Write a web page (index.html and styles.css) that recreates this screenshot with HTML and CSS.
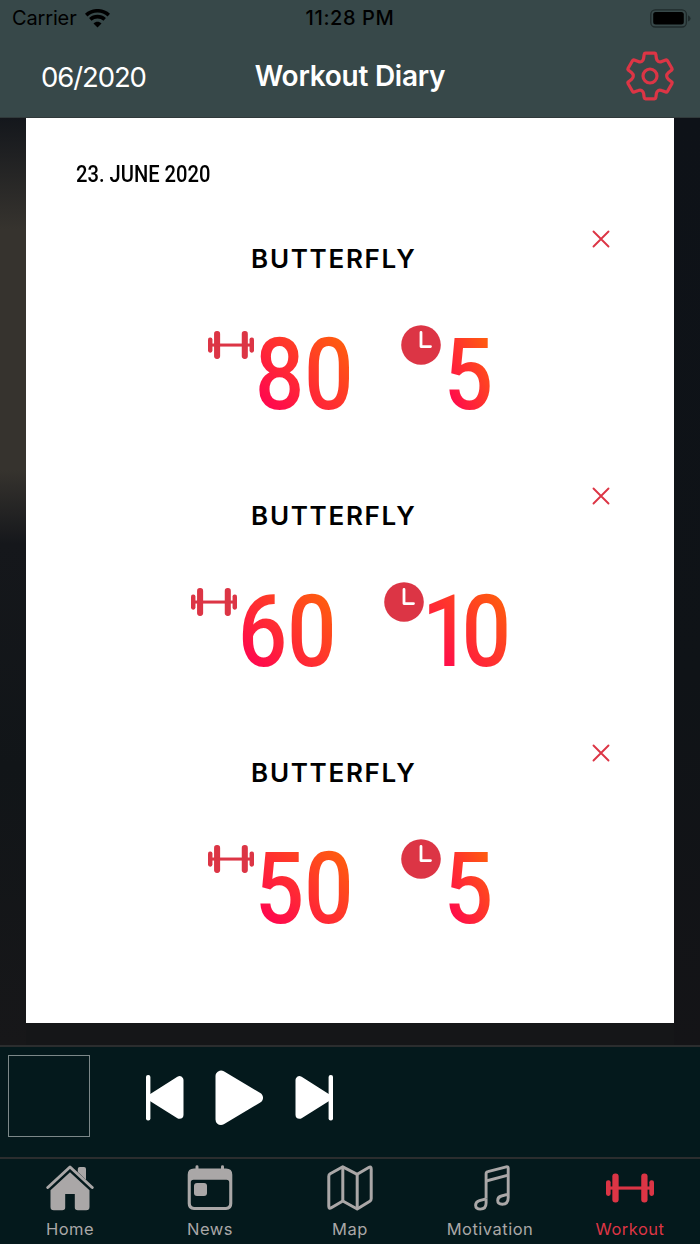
FILE: index.html
```html
<!DOCTYPE html>
<html lang="en">
  <head>
    <meta charset="UTF-8" />
    <meta name="viewport" content="width=device-width, initial-scale=1.0" />
    <title>Workout Diary</title>
    <link rel="stylesheet" href="styles.css">
  </head>
  <body>
    <!-- shared icons -->
    <svg class="sprite">
      <symbol id="dumbbell" viewBox="0 0 45.5 27.5">
        <rect x="0" y="6.3" width="4.4" height="15" rx="2" />
        <rect x="6" y="0" width="6" height="27.5" rx="2.8" />
        <rect x="3" y="12.3" width="39" height="3" />
        <rect x="33.4" y="0" width="6" height="27.5" rx="2.8" />
        <rect x="41.1" y="6.3" width="4.4" height="15" rx="2" />
      </symbol>
      <symbol id="clock" viewBox="0 0 40 40">
        <circle cx="20" cy="20" r="19.8" />
        <path d="M20 7.5V21.6H29.5" fill="none" stroke="#fff" stroke-width="2.8" stroke-linecap="round" stroke-linejoin="round" />
      </symbol>
      <symbol id="close" viewBox="0 0 18 18">
        <path d="M1.5 1.5L16.5 16.5M16.5 1.5L1.5 16.5" fill="none" stroke="currentColor" stroke-width="1.9" stroke-linecap="round" />
      </symbol>
    </svg>

    <header>
      <div class="status">
        <div class="carrier">
          <span>Carrier</span>
          <svg width="25" height="19" viewBox="0 0 25 19">
            <g fill="none" stroke="#000" stroke-width="3.6">
              <path d="M1.2 6.1C7.5 .3 17.5 .3 23.8 6.1" />
              <path d="M5.3 10.4C9.4 6.7 15.6 6.7 19.7 10.4" />
            </g>
            <path d="M8.5 14.4C10.8 12.2 14.2 12.2 16.5 14.4L12.5 18.5Z" />
          </svg>
        </div>
        <span class="time">11:28 PM</span>
        <svg class="battery" width="41" height="19" viewBox="0 0 41 19">
          <rect x=".8" y=".8" width="35.6" height="17.2" rx="4.5" fill="none" stroke="#1f2a2b" stroke-width="1.3" />
          <rect x="3.2" y="3" width="30.6" height="12.6" rx="2.5" />
          <path d="M38 6.3Q40.6 7.5 40.6 9.4Q40.6 11.3 38 12.5Z" fill="#1f2a2b" />
        </svg>
      </div>
      <nav class="navbar">
        <a class="month">06/2020</a>
        <h1>Workout Diary</h1>
        <a class="settings">
          <svg width="50" height="50" viewBox="-25 -25 50 50">
            <g fill="none" stroke="currentColor" stroke-width="3.2" stroke-linejoin="round">
              <path d="M-4.5 -22.8H4.5Q5.6 -22.8 5.8 -21.7L6.4 -17.5Q6.7 -15.5 8.2 -14.6Q9.8 -13.7 11.7 -14.5L15.8 -16.1Q16.8 -16.5 17.4 -15.5L22 -7.5Q22.5 -6.5 21.7 -5.9L18.3 -3.2Q16.7 -1.9 16.7 0Q16.7 1.9 18.3 3.2L21.7 5.9Q22.5 6.5 22 7.5L17.4 15.5Q16.8 16.5 15.8 16.1L11.7 14.5Q9.8 13.7 8.2 14.6Q6.7 15.5 6.4 17.5L5.8 21.7Q5.6 22.8 4.5 22.8H-4.5Q-5.6 22.8 -5.8 21.7L-6.4 17.5Q-6.7 15.5 -8.2 14.6Q-9.8 13.7 -11.7 14.5L-15.8 16.1Q-16.8 16.5 -17.4 15.5L-22 7.5Q-22.5 6.5 -21.7 5.9L-18.3 3.2Q-16.7 1.9 -16.7 0Q-16.7 -1.9 -18.3 -3.2L-21.7 -5.9Q-22.5 -6.5 -22 -7.5L-17.4 -15.5Q-16.8 -16.5 -15.8 -16.1L-11.7 -14.5Q-9.8 -13.7 -8.2 -14.6Q-6.7 -15.5 -6.4 -17.5L-5.8 -21.7Q-5.6 -22.8 -4.5 -22.8Z" />
              <circle r="7" />
            </g>
          </svg>
        </a>
      </nav>
    </header>

    <main>
      <section class="card">
        <h2><span class="narrow">23. JUNE 2020</span></h2>

        <article class="entry">
          <div class="entry-head">
            <h3>BUTTERFLY</h3>
            <svg class="close"><use href="#close" /></svg>
          </div>
          <div class="figures">
            <svg class="dumbbell"><use href="#dumbbell" /></svg>
            <div class="value two"><span>80</span></div>
            <svg class="clock"><use href="#clock" /></svg>
            <div class="value"><span>5</span></div>
          </div>
        </article>

        <article class="entry">
          <div class="entry-head">
            <h3>BUTTERFLY</h3>
            <svg class="close"><use href="#close" /></svg>
          </div>
          <div class="figures">
            <svg class="dumbbell"><use href="#dumbbell" /></svg>
            <div class="value two"><span>60</span></div>
            <svg class="clock"><use href="#clock" /></svg>
            <div class="value ten"><span>10</span></div>
          </div>
        </article>

        <article class="entry">
          <div class="entry-head">
            <h3>BUTTERFLY</h3>
            <svg class="close"><use href="#close" /></svg>
          </div>
          <div class="figures">
            <svg class="dumbbell"><use href="#dumbbell" /></svg>
            <div class="value two"><span>50</span></div>
            <svg class="clock"><use href="#clock" /></svg>
            <div class="value"><span>5</span></div>
          </div>
        </article>
      </section>
    </main>

    <section class="player">
      <div class="cover"></div>
      <svg class="prev" width="38" height="46" viewBox="0 0 38 46">
        <rect x="0" y="0" width="4.4" height="45.4" rx="2" />
        <path d="M6 22.6L33.5 5.2V39.8Z" stroke="#fff" stroke-width="8" stroke-linejoin="round" />
      </svg>
      <svg class="play" width="49" height="56" viewBox="0 0 49 56">
        <path d="M6 6V49.5L42.5 27.8Z" stroke="#fff" stroke-width="11" stroke-linejoin="round" />
      </svg>
      <svg class="next" width="38" height="46" viewBox="0 0 38 46">
        <rect x="33.6" y="0" width="4.4" height="45.4" rx="2" />
        <path d="M32 22.6L4.5 5.2V39.8Z" stroke="#fff" stroke-width="8" stroke-linejoin="round" />
      </svg>
    </section>

    <nav class="tabs">
      <a>
        <svg width="48" height="46" viewBox="0 0 48 46">
          <path d="M31.8 7V4Q31.8 2 33.8 2H38Q40 2 40 4V14.8Z" />
          <path d="M24 7.2L43.5 25.2V42Q43.5 45.3 40.2 45.3H31.8Q28.8 45.3 28.8 42.5V29H19.2V42.5Q19.2 45.3 16.2 45.3H7.8Q4.5 45.3 4.5 42V25.2Z" />
          <path d="M1.8 22.5L24 2L46.2 22.5" fill="none" stroke="currentColor" stroke-width="3" stroke-linecap="round" stroke-linejoin="round" />
        </svg>
        <span>Home</span>
      </a>
      <a>
        <svg width="46" height="46" viewBox="0 0 46 46">
          <path fill-rule="evenodd" d="M8.5 3.5V1.7Q8.5 .3 10 .3Q11.5 .3 11.5 1.7V3.5H34V1.7Q34 .3 35.5 .3Q37 .3 37 1.7V3.5H39Q45.3 3.5 45.3 9.8V38.5Q45.3 45 39 45H7Q.7 45 .7 38.5V9.8Q.7 3.5 7 3.5ZM6.5 14.7Q3.8 14.7 3.8 17.4V38Q3.8 41.9 7.7 41.9H38.3Q42.2 41.9 42.2 38V17.4Q42.2 14.7 39.5 14.7Z" />
          <rect x="7" y="18" width="13" height="13" rx="3" />
        </svg>
        <span>News</span>
      </a>
      <a>
        <svg width="46" height="46" viewBox="0 0 46 46">
          <g fill="none" stroke="currentColor" stroke-width="3" stroke-linejoin="round">
            <path d="M15.8 1.8L3.2 8.8Q1.8 9.7 1.8 11.3V41.3Q1.8 44.3 4.3 42.8L15.8 36L30.2 44L42.8 36.3Q44.2 35.4 44.2 33.8V4Q44.2 1 41.7 2.5L30.2 9.3Z" />
            <path d="M15.8 1.8V36M30.2 9.3V44" />
          </g>
        </svg>
        <span>Map</span>
      </a>
      <a>
        <svg class="note" width="36" height="46" viewBox="0 0 36 46">
          <g fill="none" stroke="currentColor" stroke-width="2.9" stroke-linejoin="round">
            <path d="M12.1 33.5V8.7Q12.1 7 13.8 6.6L32.3 1.8Q34.2 1.4 34.2 3.2V32.5Q34.2 39.2 28.3 39.2Q23.7 39.2 23.7 35.5Q23.7 32 27.5 31L34.2 29.2" />
            <path d="M12.1 16L34.2 10.2M12.1 33.5V38Q12.1 44.1 6.3 44.1Q1.6 44.1 1.6 40.3Q1.6 36.8 5.4 35.7L12.1 33.8" />
          </g>
        </svg>
        <span>Motivation</span>
      </a>
      <a class="active">
        <svg width="48" height="46"><use href="#dumbbell" /></svg>
        <span>Workout</span>
      </a>
    </nav>
  </body>
</html>
```

FILE: styles.css
```css
* {
  box-sizing: border-box;
}

body {
  margin: 0;
  height: 1244px;
  display: flex;
  flex-direction: column;
  overflow: hidden;
  font-family: Inter, "Liberation Sans", sans-serif;
  background-color: #121316;
}

h1,
h2,
h3 {
  margin: 0;
}

svg {
  display: block;
  flex-shrink: 0;
  fill: currentColor;
}

.sprite {
  width: 0;
  height: 0;
  position: absolute;
}

header {
  height: 118px;
  background-color: #374849;
  border-bottom: 1px solid #30393a;
  flex-shrink: 0;
}

.status {
  display: grid;
  grid-template-columns: 1fr auto 1fr;
  align-items: center;
  height: 36px;
  padding: 0 9px 0 12px;
  font-size: 20px;
  color: #000;
}

.carrier {
  display: flex;
  align-items: center;
  gap: 8px;
  letter-spacing: -0.15px;
}

.time {
  font-weight: 500;
  letter-spacing: 0.6px;
  margin-left: -3px;
}

.battery {
  justify-self: end;
}

.navbar {
  display: grid;
  grid-template-columns: 1fr auto 1fr;
  align-items: center;
  height: 80px;
  padding: 0 25.5px 0 41px;
  color: #fff;
}

.month {
  font-size: 27.5px;
  letter-spacing: -1.1px;
  padding-top: 1px;
}

h1 {
  font-size: 28px;
  font-weight: 600;
  margin-left: -15.5px;
  letter-spacing: -0.25px;
}

.settings {
  justify-self: end;
  color: #dc3545;
}

main {
  height: 927px;
  padding: 0 26px;
  background:
    linear-gradient(#14171c, #36332e 12%, #36332e 38%, #15171b 46%, #111518 70%, #171719) left / 26px 100% no-repeat,
    linear-gradient(#0e1218, #0f1317 60%, #141417) right / 26px 100% no-repeat,
    #151618;
}

.card {
  height: 905px;
  background-color: #fff;
  padding: 43px 50px 0;
}

h2 {
  height: 69px;
  line-height: 26px;
  font-family: Roboto, "Liberation Sans", sans-serif;
  font-size: 24px;
  font-weight: 500;
}

/* squeezed letters for the condensed look */
.narrow {
  display: inline-block;
  transform: scaleX(0.84);
  transform-origin: left;
}

.entry {
  height: 257px;
}

.entry-head {
  display: flex;
  align-items: flex-start;
  width: 533.5px;
}

h3 {
  flex: 1;
  text-align: center;
  line-height: 58px;
  font-size: 26px;
  font-weight: 600;
  letter-spacing: 1.7px;
}

.close {
  width: 18px;
  height: 18px;
  color: #dc3545;
}

.figures {
  display: flex;
  justify-content: center;
  align-items: flex-start;
  margin-top: 37px;
  color: #dc3545;
}

.dumbbell {
  width: 46px;
  height: 28px;
  margin-top: 6px;
}

.clock {
  width: 40px;
  height: 40px;
  margin-left: 48px;
}

.value {
  width: 51px;
  height: 100px;
  padding-left: 3px;
  font-family: Roboto, "Liberation Sans", sans-serif;
  font-size: 100px;
  font-weight: 500;
  line-height: 99px;
}

.value.two {
  width: 99px;
  padding-left: 1px;
}

.value.ten {
  width: 86px;
  padding-left: 0;
}

.value span {
  display: inline-block;
  transform: scaleX(0.865);
  transform-origin: left;
  background: linear-gradient(to top right, #ff0a4c 18%, #ff5a10 85%);
  -webkit-background-clip: text;
  background-clip: text;
  color: transparent;
}

.value.ten span {
  margin-left: -2px;
  padding-right: 11px;
  letter-spacing: -11px;
}

.player {
  height: 112px;
  flex-shrink: 0;
  display: flex;
  align-items: flex-start;
  padding: 8px;
  border-top: 2px solid #2b2d2e;
  background-color: #04191c;
  color: #fff;
}

.cover {
  width: 82px;
  height: 82px;
  border: 1px solid #7c8889;
}

.prev {
  margin: 20px 0 0 56px;
}

.play {
  margin: 15px 0 0 31px;
}

.next {
  margin: 20px 0 0 31px;
}

.tabs {
  flex: 1;
  display: grid;
  grid-template-columns: repeat(5, 1fr);
  border-top: 2px solid #2b2d2e;
  background-color: #04191c;
}

.tabs a {
  display: flex;
  flex-direction: column;
  align-items: center;
  gap: 8px;
  padding-top: 6px;
  font-size: 16.5px;
  letter-spacing: 0.5px;
  color: #aaa7a7;
}

.tabs .note {
  margin-left: 3px;
}

.tabs .active {
  color: #dc3545;
}
```
